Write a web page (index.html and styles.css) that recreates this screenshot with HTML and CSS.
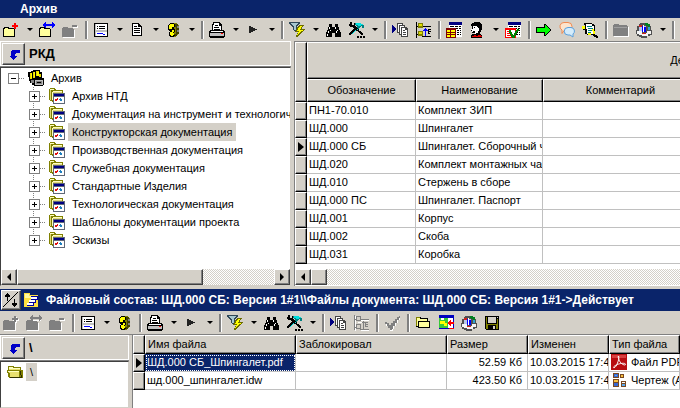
FILE: index.html
```html
<!DOCTYPE html>
<html lang="ru">
<head>
<meta charset="utf-8">
<title>Архив</title>
<link rel="stylesheet" href="styles.css">
</head>
<body>
<svg class="sprites" aria-hidden="true">
  <symbol id="folder" viewBox="0 0 16 16"><path fill="#000" d="M1 5h5v1h5v1h1v8H0V6h1z"/><path fill="#ffff9c" d="M1 7h10v7H1zM2 6h3v1H2z"/></symbol>
  <symbol id="folder-off" viewBox="0 0 16 16"><path fill="#fff" d="M2 6h5v1h5v1h1v8H1V7h1z"/><path fill="#808080" d="M1 5h5v1h5v1h1v8H0V6h1z"/></symbol>
  <symbol id="add" viewBox="0 0 16 16"><use href="#folder"/><path fill="red" d="M11 1h2v2h2v2h-2v2h-2V5H9V3h2z"/></symbol>
  <symbol id="add-off" viewBox="0 0 16 16"><use href="#folder-off"/><path fill="#fff" d="M12 2h2v2h2v2h-2v2h-2V6h-2V4h2z"/><path fill="#808080" d="M11 1h2v2h2v2h-2v2h-2V5H9V3h2z"/></symbol>
  <symbol id="link" viewBox="0 0 16 16"><use href="#folder"/><path fill="#0000ff" d="M6 0h1v2h6V0h1v1h1v1h1v2h-1v1h-1v1h-1V4H7v2H6V5H5V4H4V2h1V1h1z"/></symbol>
  <symbol id="link-off" viewBox="0 0 16 16"><use href="#folder-off"/><path fill="#fff" d="M7 5h8v1H7z"/><path fill="#808080" d="M6 0h1v2h6V0h1v1h1v1h1v2h-1v1h-1v1h-1V4H7v2H6V5H5V4H4V2h1V1h1z"/></symbol>
  <symbol id="remove-off" viewBox="0 0 16 16"><use href="#folder-off"/><path fill="#fff" d="M11 4h5v2h-5z"/><path fill="#808080" d="M10 3h5v2h-5z"/></symbol>
  <symbol id="form" viewBox="0 0 16 16"><path d="M1 1h14v14H1z"/><path fill="#fff" d="M2 2h12v12H2z"/><path d="M4 4h1v1H4zM6 4h6v1H6zM4 6h1v1H4zM6 6h6v1H6z"/><path fill="#c0c0c0" d="M2 2h1v12H2zM3 8h11v2H3z"/><path fill="#0000ff" d="M4 11h6v1H4zM10 12h2v1h-2z"/></symbol>
  <symbol id="doc" viewBox="0 0 16 16"><path d="M3 1h7v1h1v1h1v1h1v10H3z"/><path fill="#fff" d="M4 2h5v3h3v8H4z"/><path d="M5 4h3v1H5zM5 6h6v1H5zM5 8h6v1H5zM5 10h6v1H5zM9 2h1v2h2v1H9z"/></symbol>
  <symbol id="mask" viewBox="0 0 16 16"><path fill="#808000" d="M8 1h4l2 3v7l-3 4H7z"/><path fill="#404000" d="M10 2h3v2h1v8h-2v2h-3v-2h2V5h-1z"/><path fill="#808080" d="M12 4h2v2h-2zM12 8h2v2h-2z"/><path fill="#000" d="M5 1h4v1h1v3H9v2h1v3H9v3h1v1H9v1H5v-1H4v-4h1V9H4V8H3V3h1V2h1z"/><path fill="#ff0" d="M5 2h4v3H7v2H4V3h1zM7 8h2v2H8v1h1v2H8v1H6v-1H5v-3h2z"/></symbol>
  <symbol id="print" viewBox="0 0 16 16"><path d="M4 0h7v1h1v1h1v6h2v1h1v6h-1v1H1v-1H0V9h1V8h2V2h1z"/><path fill="#fff" d="M5 1h5v3h2v4H4V3h1zM2 9h12v1H2z"/><path fill="#c0c0c0" d="M1 11h14v3H1z"/><path d="M6 3h3v1H6zM5 5h5v1H5zM5 7h6v1H5z"/><path fill="red" d="M12 11h2v1h-2z"/></symbol>
  <symbol id="play" viewBox="0 0 16 16"><path fill="#222" d="M4 4h2v1h2v1h2v1h2v1h-2v1H8v1H6v1H4z"/></symbol>
  <symbol id="filter" viewBox="0 0 16 16"><path fill="#304858" d="M0 0h11v2h-1v1H9v1H8v4H7v2H6V9H5V8H4V5H3V4H2V3H1V2H0z"/><path fill="#a8c8d0" d="M2 1h7v1H8v1H7v5H5V4H4V3H3V2H2z"/><path fill="#6b6b00" d="M10 3h5v1h-1v1h-1v2h3v1h-1v1h-1v1h-1v1h-1v1h-1v1h-1v1H9v1H7v-2h1v-2h1v-1H6V9h1V7h1V5h1V4h1z"/><path fill="#ff0" d="M11 4h2v1h-1v2h-1v1h3v1h-2v1h-1v1h-1v1H9v1H8v-1h1v-2h1V9H8V8h1V6h1V5h1z"/></symbol>
  <symbol id="find" viewBox="0 0 16 16"><path d="M4 2h3v3h3V2h3v3h1v3h1v2h1v5h-6v-4H7v4H1v-5h1V8h1V5h1z"/><path fill="#fff" d="M4 5h1v2H4zM10 5h1v2h-1zM3 9h1v2H3zM5 8h1v1H5zM11 9h1v2h-1zM2 12h1v2H2zM12 8h1v1h-1z"/></symbol>
  <symbol id="tools" viewBox="0 0 18 16"><path d="M2 0h2v3h2V1h1v3h1v1h1v1h1v1h1v2h2v1h1v1h1v2h-2v-1h-1v-1h-1v-1h-1V9H8V8H7v1H6v1H5v1H4v1H3v1H1v-2h1v-1h1V9h1V8h1V7h1V6H5V5H2V4H1V2h1z"/><path fill="#008080" d="M7 1h6v1h2v1h1v3h-2V4h-1v1h-1v1h-1v1h-1V6H9V4H8V3H7z"/><path fill="#00e0e0" d="M8 1h5v1h2v1h-2v1h-3V3H8zM9 7h1v1H8v1H7v1H6v1H5v1H4v-1h1v-1h1V9h1V8h2z"/><path d="M9 14h2v2H9zM12 14h2v2h-2zM15 14h2v2h-2z"/></symbol>
  <symbol id="copies" viewBox="0 0 16 16"><path fill="#000080" d="M0 3h1v1h1v1h1v1h1v2H3v1H2v1H1v1H0z"/><path fill="#444" d="M5 1h6v2h2v2h2v1h1v9H9v-2H7v-2H5z"/><path fill="#fff" d="M6 2h4v1H7v7H6zM8 4h4v1H9v7H8zM10 6h3v2h2v6h-5z"/><path fill="#444" d="M11 8h2v1h-2zM11 10h3v1h-3zM11 12h3v1h-3z"/></symbol>
  <symbol id="nodes" viewBox="0 0 16 16"><path d="M1 0h1v16H1zM2 4h2v1H2zM2 12h2v1H2zM7 4h9v1H7zM7 14h9v1H7zM13 7h3v1h-2v1h2v1h-2v1h1v1h-2z"/><path fill="#808000" d="M3 1h5v5H3zM3 9h5v5H3z"/><path fill="#e0e000" d="M4 2h3v2H4zM4 10h3v2H4z"/><path fill="#0000ff" d="M10 6h1v1h1v1h1v1h-2v5h-1V9H8V8h1V7h1z"/></symbol>
  <symbol id="nodes-off" viewBox="0 0 16 16"><path fill="#fff" d="M2 1h1v15H2zM8 5h8v1H8zM8 15h8v1H8zM5 7h4v1H5z"/><path fill="#808080" d="M1 0h1v15H1zM2 4h2v1H2zM2 12h2v1H2zM7 4h9v1H7zM7 14h9v1H7zM12 7h3v1h-2v1h2v1h-2v1h2v1h-3zM3 1h5v1H4v3h3V2h1v4H3zM3 9h5v1H4v3h3v-3h1v4H3zM10 6h1v1h1v1h-1v6h-1V8H9V7h1z"/></symbol>
  <symbol id="sheet" viewBox="0 0 16 16"><path fill="#000080" d="M3 0h13v3H3z"/><path fill="#fff" d="M3 3h13v12H3z"/><path d="M4 4h4v1H4zM9 4h3v1H9zM13 4h2v1h-2zM4 6h4v1H4zM9 6h3v1H9zM13 6h2v1h-2zM11 8h2v1h-2zM14 8h1v1h-1zM11 10h2v1h-2zM14 10h1v1h-1zM11 12h2v1h-2zM14 12h1v1h-1z"/></symbol>
  <symbol id="sheet-yellow" viewBox="0 0 16 16"><use href="#sheet"/><path fill="#800000" d="M0 6h10v10H0z"/><path fill="#ff0" d="M1 8h8v7H1z"/><path fill="#800000" d="M1 10h8v1H1zM1 12h8v1H1zM4 8h1v7H4z"/></symbol>
  <symbol id="sheet-check" viewBox="0 0 16 16"><use href="#sheet"/><path fill="red" d="M0 6h11v10H0z"/><path fill="#fff" d="M1 8h9v7H1z"/><path fill="red" d="M2 9h3v1H2zM2 11h3v1H2zM2 13h5v1H2z"/><path fill="#008000" d="M4 8h2v2h1v2h1v1h1v-2h1V9h1V8h1V7h2v2h-1v1h-1v2h-1v2h-1v2H7v-1H6v-2H5v-2H4z"/></symbol>
  <symbol id="user" viewBox="0 0 16 16"><path d="M5 0h6v1h1v1h1v6h-1v2h-1v2H6v-1H3V9H2V7h1V4H2V2h1V1h2z"/><path fill="#fff" d="M4 4h4v1h1v1h1v3H9v2H7v1H6v-2H3V8H2V7h2z"/><path d="M5 5h1v1H5zM4 9h2v1H4z"/><path d="M3 12h9v1h1v3H2v-3h1z"/><path fill="#e00000" d="M3 14h2v-1h2v1h2v-1h3v1h1v1H3z"/></symbol>
  <symbol id="go" viewBox="0 0 16 16"><path d="M8 2h2v1h1v1h1v1h1v1h1v1h1v2h-1v1h-1v1h-1v1h-1v1h-1v1H8v-3H0V5h8z"/><path fill="#0f0" d="M9 3v3H1v4h8v3l5-5z"/></symbol>
  <symbol id="chat" viewBox="0 0 16 16"><g shape-rendering="auto"><path d="M5 .5h4a4 4 0 0 1 0 8H5l-2 3V8A4 4 0 0 1 5 .5z" fill="#fde4cc" stroke="#f08a50"/><path d="M9 5.500h3a3.600 3.600 0 0 1 2 6.500v3l-3-2H9a3.700 3.700 0 0 1 0-7.500z" fill="#d4ecfb" stroke="#5aa0dc"/></g></symbol>
  <symbol id="edit" viewBox="0 0 16 16"><path d="M2 1h8v1h2v1h1v10H5v-1H3V3H2z"/><path fill="#fff" d="M4 2h6v2h2v8H5z"/><path fill="#008080" d="M5 4h5v1H5zM6 6h5v1H6zM6 8h4v1H6zM6 10h3v1H6z"/><path fill="#ff0" d="M0 4h3v3H0zM10 7h2v2h1v3h-2V9h-1zM6 11h3v2H6z"/><path d="M11 12h2v1h2v1h1v2h-2v-1h-2v-1h-1zM1 7h2v1H1z"/></symbol>
  <symbol id="folder-gray" viewBox="0 0 16 16"><path fill="#fff" d="M2 3h5v1h8v1h1v10H1V4h1z"/><path fill="#808080" d="M1 2h5v1h8v1h1v10H0V3h1z"/><path fill="#a0a0a0" d="M1 5h13v1H1z"/></symbol>
  <symbol id="stats" viewBox="0 0 16 16"><path fill="#505050" d="M4 1h7v1h3v2h1v4h1v5h-2v1h-3v2H5v-1H3v-1H1v-2H0V8h1V4h2V2h1z"/><path fill="#b8c8e8" d="M3 4h7v6H3z"/><path fill="#f4f4f4" d="M1 9h5v2h5V9h4v3h-3v2H6v-1H3v-1H1z"/><path fill="#d02020" d="M3 3h3v2H3zM6 11h4v1H6z"/><path fill="#00f" d="M6 4h1v6H6zM8 5h2v5H8z"/><path fill="#fff" d="M7 3h1v7H7z"/><path fill="#008020" d="M9 1h3v1h2v3h-2V4h-2V3H9z"/><path fill="#30a0d0" d="M12 5h2v3h-2z"/></symbol>
  <symbol id="check-off" viewBox="0 0 16 16"><path fill="#fff" d="M2 9h3v2h2v1h1v-2h2V7h2V5h2V3h2v2h-2v3h-2v3h-2v3H9v2H6v-3H4v-2H2z"/><path fill="#808080" d="M1 7h2v1h2v2h2V8h2V6h2V4h2V2h2V1h1v2h-1v2h-2v3h-2v3H9v3H8v1H6v-2H4v-2H3V9H1z"/></symbol>
  <symbol id="open" viewBox="0 0 16 16"><path d="M1 2h5v1h7v3h2v7H3v-1H1z"/><path fill="#ffff9c" d="M2 3h3v1h7v2H3v5H2zM4 7h10v5H4z"/><path fill="#808000" d="M1 2h4v1H1zM1 3h1v8H1z"/></symbol>
  <symbol id="picture" viewBox="0 0 16 16"><path fill="#0000c0" d="M1 0h15v14H1z"/><path fill="#fff" d="M10 3h5v10h-5z"/><path fill="#38c838" d="M1 3h9v10H1z"/><path fill="#ff0" d="M2 6h5v2h2v3H6V9H2z"/><path fill="#fff" d="M3 3h3v2H3z"/><path fill="red" d="M10 7h1V6h1V5h1v2h3v2h-3v2h-1v-1h-1V9h-1zM11 13h5v1h-5z"/></symbol>
  <symbol id="save" viewBox="0 0 16 16"><path d="M1 1h14v14H2v-1H1z"/><path fill="#808000" d="M2 2h1v7h10V4h1v10h-2v-4H4v4H2z"/><path fill="#d4d0c8" d="M4 2h8v6H4zM13 2h1v1h-1zM9 11h2v3H9z"/></symbol>
  <symbol id="back" viewBox="0 0 16 16"><path fill="#0000c8" d="M6 4h8v3h-4v1H9v2h2v1h-1v1H9v1H8v1H7v-1H6v-1H5v-1H4v-1h1V5h1z"/></symbol>
  <symbol id="cabinet" viewBox="0 0 16 16"><path d="M0 2h3V1h2V0h7v2h2v6h2v7h-1v1H6v-1H4v-2H2v-2H1V7H0z"/><path fill="#e8d800" d="M2 3h2v6H2zM5 2h2v6H5zM8 1h3v5H8zM11 4h2v3h-2z"/><path fill="#ff0" d="M3 3h1v5H3zM6 2h1v5H6zM9 2h2v4H9z"/><path fill="#c0c0c0" d="M7 10h8v5H7z"/><path fill="#808080" d="M3 10h3v3H3zM8 11h6v3H8z"/><path d="M9 12h4v1H9z"/></symbol>
  <symbol id="node" viewBox="0 0 16 16"><path fill="#808000" d="M1 0h5v1h1v1h7v12H3v-1H1v-1H0V1h1z"/><path fill="#ffffc0" d="M1 1h4v1H1zM4 3h9v1H4zM3 4h1v8H3z"/><path fill="#e0d878" d="M1 2h1v10H1zM4 4h9v4H4z"/><path fill="#606878" d="M4 5h12v11H4z"/><path fill="#000080" d="M5 6h10v2H5z"/><path fill="#fff" d="M5 9h10v6H5z"/><path fill="#e01010" d="M6 11h2v2H6zM8 10h1v2H8z"/><path fill="#2080c0" d="M11 10h1v3h-1zM10 11h3v1h-3zM12 12h1v1h-1z"/></symbol>
  <symbol id="file-folder" viewBox="0 0 16 16"><path fill="#808000" d="M1 2h6v1h7v3h2v8H2v-1H1V9H0V6h1z"/><path fill="#ffffc0" d="M2 3h4v1h7v1H2zM1 7h11v1H1z"/><path fill="#e8e070" d="M2 5h11v1H2zM2 8h10v5H3V9H2z"/><path fill="#303000" d="M13 7h1v4h1v3H3v-1h11v-2h-1z"/></symbol>
  <symbol id="stack" viewBox="0 0 16 16"><path fill="#ffe040" d="M0 1h6v2h8v12H0z"/><path fill="#fff8a0" d="M1 2h4v2h8v2H1z"/><path fill="#fff" d="M7 5h6v2H7zM5 8h6v2H5zM3 11h6v2H3z"/><path fill="#0000a0" d="M7 4h7v1H7zM13 5h1v3h-1zM7 7h6v1H7zM5 10h6v1H5zM11 8h1v3h-1zM3 13h6v1H3zM9 11h1v3H9z"/></symbol>
  <symbol id="swap" viewBox="0 0 18 18"><path d="M5 2h1v1h1v1h1v2H6v4H5V6H3V4h1V3h1zM12 8h1v4h2v2h-1v1h-1v1h-1v-1h-1v-1h-1v-2h2zM15 1h1v1h-1v1h-1v1h-1v1h-1v1h-1v1h-1v1H9v1H8v1H7v1H6v1H5v1H4v1H3v1H2v1H1v-1h1v-1h1v-1h1v-1h1v-1h1v-1h1V9h1V8h1V7h1V6h1V5h1V4h1V3h1V2h1z"/></symbol>
  <symbol id="pdf" viewBox="0 0 16 16"><path fill="#b80c10" d="M0 0h16v16H0z"/><path fill="#d84040" d="M1 1h14v3H1z"/><path shape-rendering="auto" fill="none" stroke="#fff" d="M7.500 2c-1 1 1 6 3 7.500s4 2 4 .8-3-1.300-6-.5-6 2.500-6 3.500 2 .5 3.500-3 2.500-7 1.500-8.300z"/></symbol>
  <symbol id="drawing" viewBox="0 0 16 16"><path fill="#784820" d="M2 1h6v5H2zM2 7h6v8H2zM10 9h5v6h-5zM9 2h4v4H9z"/><path fill="#3868d0" d="M3 2h4v3H3zM3 11h4v3H3z"/><path fill="#f8c040" d="M3 8h4v2H3zM10 3h2v2h-2z"/><path fill="#58a8f0" d="M11 12h3v2h-3zM4 3h2v1H4z"/><path fill="#fff" d="M11 10h3v1h-3z"/></symbol>
</svg>

<header class="titlebar">Архив</header>
<div class="toolbar" role="toolbar" aria-label="Архив">
  <button class="tool"><svg><use href="#add"/></svg></button><button class="drop"></button>
  <button class="tool"><svg><use href="#link"/></svg></button>
  <button class="tool"><svg><use href="#remove-off"/></svg></button>
  <span class="sep"></span>
  <button class="tool"><svg><use href="#form"/></svg></button><button class="drop"></button>
  <button class="tool"><svg><use href="#doc"/></svg></button><button class="drop"></button>
  <button class="tool"><svg><use href="#mask"/></svg></button><button class="drop"></button>
  <span class="sep"></span>
  <button class="tool"><svg><use href="#print"/></svg></button><button class="drop"></button>
  <button class="tool"><svg><use href="#play"/></svg></button><button class="drop"></button>
  <span class="sep"></span>
  <button class="tool"><svg><use href="#filter"/></svg></button><button class="drop"></button>
  <button class="tool"><svg><use href="#find"/></svg></button>
  <button class="tool"><svg class="wide"><use href="#tools"/></svg></button><button class="drop"></button>
  <span class="sep"></span>
  <button class="tool"><svg><use href="#copies"/></svg></button>
  <button class="tool"><svg><use href="#nodes"/></svg></button>
  <span class="sep"></span>
  <button class="tool"><svg><use href="#sheet-yellow"/></svg></button>
  <button class="tool"><svg><use href="#user"/></svg></button><button class="drop"></button>
  <button class="tool"><svg><use href="#sheet-check"/></svg></button>
  <span class="sep"></span>
  <button class="tool"><svg><use href="#go"/></svg></button>
  <button class="tool"><svg><use href="#chat"/></svg></button>
  <button class="tool"><svg><use href="#edit"/></svg></button>
  <span class="sep"></span>
  <button class="tool"><svg><use href="#folder-gray"/></svg></button>
  <button class="tool"><svg><use href="#stats"/></svg></button><button class="drop"></button>
  <span class="sep"></span>
</div>

<main class="archive">
  <section class="side">
    <div class="path"><button class="up"><svg><use href="#back"/></svg></button><span>РКД</span></div>
    <div class="tree-box">
      <ul class="tree">
        <li>
          <div class="row root"><button class="toggle open"></button><svg><use href="#cabinet"/></svg><span class="label">Архив</span></div>
          <ul class="branch">
            <li class="row"><button class="toggle"></button><svg><use href="#node"/></svg><span class="label">Архив НТД</span></li>
            <li class="row"><button class="toggle"></button><svg><use href="#node"/></svg><span class="label">Документация на инструмент и технологич</span></li>
            <li class="row"><button class="toggle"></button><svg><use href="#node"/></svg><span class="label current">Конструкторская документация</span></li>
            <li class="row"><button class="toggle"></button><svg><use href="#node"/></svg><span class="label">Производственная документация</span></li>
            <li class="row"><button class="toggle"></button><svg><use href="#node"/></svg><span class="label">Служебная документация</span></li>
            <li class="row"><button class="toggle"></button><svg><use href="#node"/></svg><span class="label">Стандартные Изделия</span></li>
            <li class="row"><button class="toggle"></button><svg><use href="#node"/></svg><span class="label">Технологическая документация</span></li>
            <li class="row"><button class="toggle"></button><svg><use href="#node"/></svg><span class="label">Шаблоны документации проекта</span></li>
            <li class="row"><button class="toggle"></button><svg><use href="#node"/></svg><span class="label">Эскизы</span></li>
          </ul>
        </li>
      </ul>
      <div class="scroll"><button class="arrow left"></button><span class="thumb long"></span><span class="track"></span><button class="arrow right"></button></div>
    </div>
  </section>

  <section class="docs">
    <table class="grid docs-grid">
      <colgroup><col class="c-mark"><col class="c-code"><col class="c-name"><col class="c-note"><col></colgroup>
      <thead>
        <tr class="band"><th rowspan="2"></th><th colspan="4">Де</th></tr>
        <tr class="heads"><th>Обозначение</th><th>Наименование</th><th>Комментарий</th><th></th></tr>
      </thead>
      <tbody>
        <tr><th></th><td>ПН1-70.010</td><td>Комплект ЗИП</td><td></td><td></td></tr>
        <tr><th></th><td>ШД.000</td><td>Шпингалет</td><td></td><td></td></tr>
        <tr class="active"><th></th><td>ШД.000 СБ</td><td>Шпингалет. Сборочный ч</td><td></td><td></td></tr>
        <tr><th></th><td>ШД.020</td><td>Комплект монтажных ча</td><td></td><td></td></tr>
        <tr><th></th><td>ШД.010</td><td>Стержень в сборе</td><td></td><td></td></tr>
        <tr><th></th><td>ШД.000 ПС</td><td>Шпингалет. Паспорт</td><td></td><td></td></tr>
        <tr><th></th><td>ШД.001</td><td>Корпус</td><td></td><td></td></tr>
        <tr><th></th><td>ШД.002</td><td>Скоба</td><td></td><td></td></tr>
        <tr><th></th><td>ШД.031</td><td>Коробка</td><td></td><td></td></tr>
      </tbody>
    </table>
    <div class="scroll"><button class="arrow left"></button><span class="thumb"></span><span class="track"></span></div>
  </section>
</main>

<div class="titlebar files-title"><button class="swap"><svg><use href="#swap"/></svg></button><svg><use href="#stack"/></svg><span>Файловый состав: ШД.000 СБ: Версия 1#1\\Файлы документа: ШД.000 СБ: Версия 1#1-&gt;Действует</span></div>
<div class="toolbar" role="toolbar" aria-label="Файлы">
  <button class="tool"><svg><use href="#add-off"/></svg></button>
  <button class="tool"><svg><use href="#link-off"/></svg></button>
  <button class="tool"><svg><use href="#remove-off"/></svg></button>
  <span class="sep"></span>
  <button class="tool"><svg><use href="#form"/></svg></button><button class="drop"></button>
  <button class="tool"><svg><use href="#mask"/></svg></button>
  <span class="sep"></span>
  <button class="tool"><svg><use href="#print"/></svg></button><button class="drop"></button>
  <button class="tool"><svg><use href="#play"/></svg></button><button class="drop"></button>
  <span class="sep"></span>
  <button class="tool"><svg><use href="#filter"/></svg></button><button class="drop"></button>
  <button class="tool"><svg><use href="#find"/></svg></button>
  <button class="tool"><svg class="wide"><use href="#tools"/></svg></button><button class="drop"></button>
  <span class="sep"></span>
  <button class="tool"><svg><use href="#copies"/></svg></button>
  <button class="tool"><svg><use href="#nodes-off"/></svg></button>
  <span class="sep"></span>
  <button class="tool"><svg><use href="#check-off"/></svg></button>
  <span class="sep"></span>
  <button class="tool"><svg><use href="#open"/></svg></button>
  <button class="tool"><svg><use href="#picture"/></svg></button>
  <button class="tool"><svg><use href="#stats"/></svg></button>
  <button class="tool"><svg><use href="#save"/></svg></button>
</div>

<section class="files">
  <div class="side small">
    <div class="path"><button class="up"><svg><use href="#back"/></svg></button><span>\</span></div>
    <div class="tree-box">
      <ul class="tree"><li class="row"><svg><use href="#file-folder"/></svg><span class="label current">\</span></li></ul>
    </div>
  </div>
  <div class="file-list">
    <table class="grid files-grid">
      <colgroup><col class="c-mark"><col class="c-file"><col class="c-file"><col class="c-size"><col class="c-size"><col></colgroup>
      <thead><tr class="heads"><th></th><th>Имя файла</th><th>Заблокировал</th><th>Размер</th><th>Изменен</th><th>Тип файла</th></tr></thead>
      <tbody>
        <tr class="active"><th></th><td class="chosen">ШД.000 СБ_Шпингалет.pdf</td><td></td><td class="num">52.59 Кб</td><td>10.03.2015 17:4</td><td class="type"><svg><use href="#pdf"/></svg>Файл PDF</td></tr>
        <tr><th></th><td>шд.000_шпингалет.idw</td><td></td><td class="num">423.50 Кб</td><td>10.03.2015 17:4</td><td class="type"><svg><use href="#drawing"/></svg>Чертеж (A</td></tr>
      </tbody>
    </table>
  </div>
</section>
</body>
</html>
```
FILE: styles.css
```css
:root {
  --face: #d4d0c8;
  --navy: #0a246a;
  --gray: #808080;
  --dark: #404040;
}

* { box-sizing: border-box; }

body {
  margin: 0;
  min-height: 100vh;
  display: flex;
  flex-direction: column;
  overflow: hidden;
  background: var(--face);
  color: #000;
  font: 11px/18px "Liberation Sans", Arial, sans-serif;
}

button { padding: 0; border: 0; background: none; font: inherit; }
ul { list-style: none; margin: 0; padding: 0; }
svg { display: block; flex: none; width: 16px; height: 16px; shape-rendering: crispEdges; }
.sprites { display: none; }

.titlebar {
  height: 18px;
  padding-left: 20px;
  background: var(--navy);
  color: #fff;
  font-size: 12px;
  font-weight: bold;
  white-space: nowrap;
  overflow: hidden;
}

.toolbar { display: flex; height: 23px; align-items: center; overflow: hidden; }
.tool { flex: none; width: 23px; padding-left: 3px; }
.tool .wide { width: 18px; }
.drop { flex: none; display: flex; justify-content: center; width: 13px; }
.drop::before { content: ""; border: 3px solid transparent; border-top-color: #000; border-bottom: 0; }
.sep { flex: none; width: 8px; height: 18px; }
.sep::before { content: ""; display: block; width: 2px; height: 18px; margin-left: 3px; background: var(--gray); border-right: 1px solid #fff; }

.archive { display: flex; height: 245px; }
.side { flex: 0 0 291px; min-width: 0; display: flex; flex-direction: column; gap: 1px; background: var(--gray); }

.path {
  flex: none;
  display: flex;
  align-items: center;
  gap: 4px;
  height: 25px;
  padding-left: 1px;
  border: 1px solid #fff;
  background: var(--face);
  font-weight: bold;
  font-size: 13px;
}

.up, .swap, .arrow, .thumb {
  flex: none;
  border: 1px solid;
  border-color: #fff var(--dark) var(--dark) #fff;
  box-shadow: inset -1px -1px var(--gray);
  background: var(--face);
}
.up { display: flex; justify-content: center; align-items: center; width: 23px; height: 22px; }

.tree-box {
  flex: 1;
  display: flex;
  flex-direction: column;
  justify-content: space-between;
  min-height: 0;
  border: 1px solid var(--face);
  border-color: var(--dark) var(--face) var(--face) var(--dark);
  background: #fff;
  overflow: hidden;
}
.tree { padding: 1px 0 0 5px; overflow: hidden; }
.row { display: flex; height: 18px; align-items: center; white-space: nowrap; }
.label { padding: 0 4px; }
.row svg { margin-right: 3px; }
.current { background: var(--face); }
.branch { padding-left: 21px; }
.branch .row { background: repeating-linear-gradient(var(--gray) 0 1px, transparent 1px 2px) 6px 0 / 1px 100% no-repeat; }
.branch .row:last-child { background-size: 1px 9px; }

.toggle {
  display: flex;
  flex: none;
  align-items: center;
  width: 22px;
  height: 18px;
  padding-left: 2px;
}
.toggle::before {
  content: "";
  width: 9px;
  height: 9px;
  border: 1px solid var(--gray);
  background:
    linear-gradient(#000, #000) center / 5px 1px no-repeat,
    linear-gradient(#000, #000) center / 1px 5px no-repeat,
    #fff;
}
.toggle.open::before { background: linear-gradient(#000, #000) center / 5px 1px no-repeat, #fff; }
.toggle::after {
  content: "";
  width: 6px;
  height: 1px;
  background: repeating-linear-gradient(90deg, var(--gray) 0 1px, transparent 1px 2px);
}

.scroll { flex: none; display: flex; height: 16px; }
.arrow { display: flex; align-items: center; justify-content: center; width: 16px; }
.arrow::before { content: ""; border: 4px solid transparent; }
.left::before { border-right-color: #000; border-left: 0; }
.right::before { border-left-color: #000; border-right: 0; }
.thumb { width: 16px; }
.thumb.long { flex: 0 1 186px; }
.track { flex: 1; background: repeating-conic-gradient(#fff 0 25%, var(--face) 0 50%) 0 0 / 2px 2px; }

.docs {
  flex: 1;
  min-width: 0;
  display: flex;
  flex-direction: column;
  justify-content: space-between;
  margin-left: 3px;
  padding-bottom: 1px;
  border-top: 1px solid var(--gray);
  border-left: 1px solid var(--gray);
  background: #fff;
  overflow: hidden;
}

.grid { border-collapse: separate; border-spacing: 0; table-layout: fixed; width: 100%; }
.docs-grid { width: 752px; }
.c-mark { width: 12px; }
.c-code { width: 109px; }
.c-name { width: 127px; }
.c-note { width: 155px; }
.c-file { width: 151px; }
.c-size { width: 81px; }

.grid th, .grid td { height: 18px; padding: 0; overflow: hidden; white-space: nowrap; line-height: 17px; }
.grid td { padding: 0 2px; border: 0 solid #c0c0c0; border-width: 0 1px 1px 0; }
.grid th {
  border: 1px solid;
  border-color: #fff #000 #000 #fff;
  box-shadow: inset -1px -1px var(--gray);
  background: var(--face);
  font-weight: normal;
}
.docs-grid .band th { height: 37px; }
.docs-grid .heads th { height: 23px; }
.active > th::before { content: ""; display: block; margin-left: 2px; width: 0; border: 5px solid transparent; border-left: 6px solid #000; border-right: 0; }

.files-title {
  flex: none;
  display: flex;
  align-items: center;
  gap: 3px;
  height: 22px;
  margin-top: 3px;
  padding-left: 1px;
}
.files-title span { padding-left: 3px; }
.swap { width: 20px; height: 20px; }
.swap svg { width: 18px; height: 18px; }

.files { flex: 1; display: flex; min-height: 0; border-top: 1px solid var(--gray); }
.small { flex-basis: 129px; }
.small .tree { padding-left: 6px; }
.file-list { flex: 1; min-width: 0; margin-left: 3px; border-left: 1px solid var(--gray); background: #fff; overflow: hidden; }
.files-grid .heads th { padding-left: 2px; text-align: left; }
.grid .chosen { outline: 1px dotted #fff; outline-offset: -2px; background: var(--navy); color: #fff; }
.grid .num { padding-right: 5px; text-align: right; }
.type svg { display: inline-block; margin-right: 4px; vertical-align: top; }
```
